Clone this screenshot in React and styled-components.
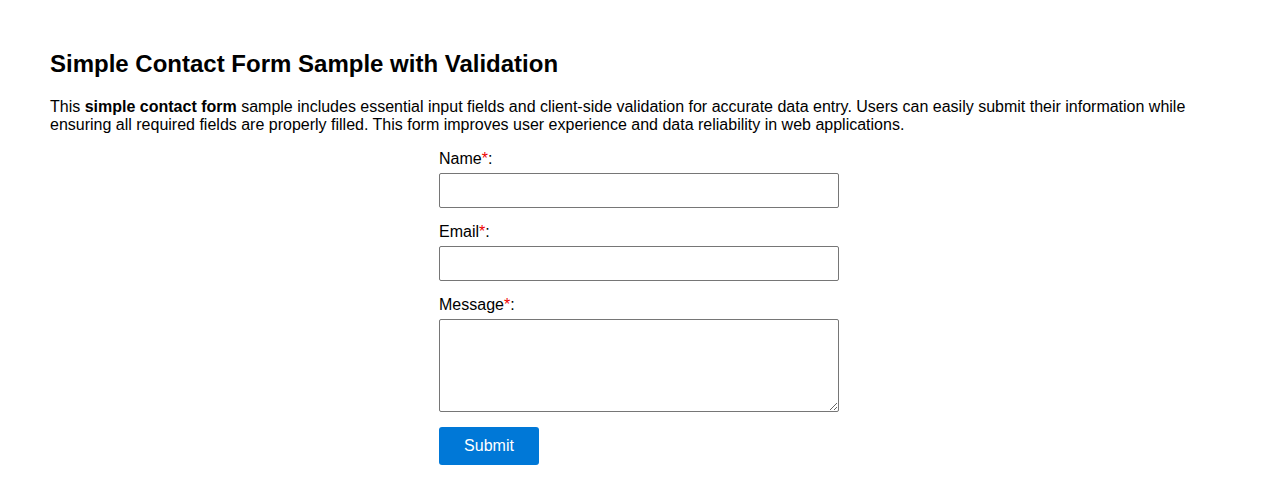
import React from "react";
import styled, { createGlobalStyle } from "styled-components";

const GlobalStyle = createGlobalStyle`
  body {
    margin: 0;
    background: #fff;
    font-family: "Liberation Sans", Arial, sans-serif;
    color: #000;
  }
`;

const Page = styled.div`
  padding: 30px 50px 20px;
`;

const Title = styled.h2`
  font-size: 24px;
  font-weight: bold;
  margin: 20px 0 20px;
`;

const Intro = styled.p`
  font-size: 16px;
  line-height: 18px;
  margin: 0 0 16px;
`;

const Form = styled.form`
  width: 400px;
  margin: 0 auto;
  display: flex;
  flex-direction: column;
`;

const Field = styled.div`
  display: flex;
  flex-direction: column;
  margin-bottom: 15px;
`;

const Label = styled.label`
  font-size: 16px;
  line-height: 18px;
  margin-bottom: 5px;
`;

const Star = styled.span`
  color: #e00;
`;

const Input = styled.input`
  box-sizing: border-box;
  width: 100%;
  height: 35px;
  border: 1px solid #767676;
  border-radius: 2px;
  padding: 8px;
  font-size: 16px;
  font-family: inherit;
`;

const TextArea = styled.textarea`
  box-sizing: border-box;
  width: 100%;
  height: 93px;
  border: 1px solid #767676;
  border-radius: 2px;
  padding: 8px;
  font-size: 16px;
  font-family: inherit;
  display: block;
`;

const Button = styled.button`
  width: 100px;
  height: 38px;
  background: #0078d7;
  color: #fff;
  border: none;
  border-radius: 3px;
  font-size: 16px;
  font-family: inherit;
  cursor: pointer;
`;

const fields = [
  { id: "name", label: "Name", type: "text" },
  { id: "email", label: "Email", type: "email" },
  { id: "message", label: "Message", multiline: true },
];

export default function App() {
  return (
    <>
      <GlobalStyle />
      <Page>
        <Title>Simple Contact Form Sample with Validation</Title>
        <Intro>
          This <b>simple contact form</b> sample includes essential input fields
          and client-side validation for accurate data entry. Users can easily
          submit their information while ensuring all required fields are
          properly filled. This form improves user experience and data
          reliability in web applications.
        </Intro>
        <Form onSubmit={(e) => e.preventDefault()}>
          {fields.map((f) => (
            <Field key={f.id}>
              <Label htmlFor={f.id}>
                {f.label}
                <Star>*</Star>:
              </Label>
              {f.multiline ? (
                <TextArea id={f.id} />
              ) : (
                <Input id={f.id} type={f.type} />
              )}
            </Field>
          ))}
          <div>
            <Button type="submit">Submit</Button>
          </div>
        </Form>
      </Page>
    </>
  );
}
